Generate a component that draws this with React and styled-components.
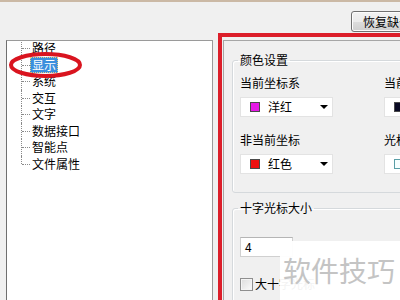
import React from "react";
import styled, { createGlobalStyle } from "styled-components";

const GlobalStyle = createGlobalStyle`
  html, body { margin: 0; padding: 0; }
  body {
    width: 400px; height: 300px; overflow: hidden;
    background: #f0f0f0;
    font-family: "Noto Sans CJK SC", "Noto Sans", sans-serif;
    font-size: 12px; color: #000;
  }
`;

const Page = styled.div`
  position: relative;
  width: 400px; height: 300px; box-sizing: border-box;
  overflow: hidden;
  border-top: 2px solid #cbb9a5;
  display: flex; flex-direction: column;
`;

const TopBar = styled.div`
  height: 31px; box-sizing: border-box;
  display: flex; align-items: flex-start;
  padding: 9px 0 0 351px;
  flex: none;
`;

const Button = styled.button`
  flex: none;
  height: 21px; box-sizing: border-box;
  padding: 0 11px;
  font: inherit; font-size: 12px; line-height: 19px;
  white-space: nowrap;
  border: 1px solid #707070; border-radius: 3px;
  background: linear-gradient(#f2f2f2 0%, #ebebeb 50%, #dddddd 51%, #cfcfcf 100%);
  box-shadow: inset 0 0 0 1px #fcfcfc;
  color: #000;
`;

const Main = styled.div`
  flex: 1; min-height: 0;
  display: flex; align-items: stretch;
`;

const TreePanel = styled.div`
  position: relative;
  flex: none;
  width: 207px; box-sizing: border-box;
  margin: 7px 0 0 6px;
  background: #fff;
  border: 1px solid #9a9a9a; border-left-color: #6f6f6f; border-bottom: none;
  overflow: hidden;
`;

const TreeList = styled.ul`
  list-style: none;
  margin: -1px 0 0 0;
  padding: 0 0 0 14px;
`;

const TreeItem = styled.li`
  position: relative;
  height: 16.5px;
  display: flex; align-items: center;
  padding-left: 9px;
  &::before {
    content: ""; position: absolute;
    left: 1px; top: 50%; width: 8px;
    border-top: 1px dotted #8a8a8a;
  }
  &::after {
    content: ""; position: absolute;
    left: 0; top: 0; bottom: ${(p) => (p.$last ? "50%" : "0")};
    border-left: 1px dotted #8a8a8a;
  }
`;

const TreeLabel = styled.span`
  height: 16px; line-height: 16px;
  padding: 0 2px;
  white-space: nowrap;
  background: ${(p) => (p.$selected ? "#3b8fdd" : "transparent")};
  color: ${(p) => (p.$selected ? "#fff" : "#000")};
  outline: ${(p) => (p.$selected ? "1px dotted #e8d080" : "none")};
  outline-offset: -1px;
`;

const Circle = styled.svg`
  position: absolute;
  left: -1px; top: 9px;
  pointer-events: none;
`;

const RedFrame = styled.div`
  flex: none;
  margin-left: 5px;
  width: 300px;
  border: 4px solid #dc1e2a;
  border-right: none; border-bottom: none;
  padding: 3px 0 0 1px;
  display: flex;
`;

const InnerPanel = styled.div`
  flex: 1;
  border-top: 1px solid #a6a6a6;
  border-left: 1px solid #a6a6a6;
  padding: 12px 0 0 8px;
`;

const Group = styled.fieldset`
  margin: ${(p) => p.$mt || 0}px 0 0 0;
  width: 280px; box-sizing: border-box;
  border: 1px solid #d5d9dc;
  border-radius: 3px;
  padding: 0 0 ${(p) => p.$pb || 0}px 7px;
  box-shadow: inset 1px 1px 0 #fff;
`;

const Legend = styled.legend`
  margin-left: -2px;
  padding: 0 2px;
  line-height: 14px;
  font-size: 12px;
`;

const FieldGrid = styled.div`
  margin-top: 8px;
  display: grid;
  grid-template-columns: 93px 93px;
  column-gap: 51px;
  row-gap: 15px;
`;

const Field = styled.div`
  display: flex; flex-direction: column;
`;

const FieldLabel = styled.div`
  height: 16px; line-height: 16px;
  margin-bottom: 6px;
  white-space: nowrap;
`;

const Dropdown = styled.div`
  height: 20px; box-sizing: border-box;
  display: flex; align-items: center;
  background: #fff;
  border: 1px solid #e3e3e3;
  padding-left: 9px;
`;

const Swatch = styled.span`
  flex: none;
  width: 10px; height: 10px; box-sizing: border-box;
  border: 1px solid ${(p) => p.$border || "#4a4a4a"};
  background: ${(p) => p.$color};
`;

const DropText = styled.span`
  margin-left: 8px;
  line-height: 16px;
  white-space: nowrap;
`;

const Arrow = styled.span`
  margin-left: auto; margin-right: 4px;
  width: 0; height: 0;
  border-left: 4px solid transparent;
  border-right: 4px solid transparent;
  border-top: 4px solid #000;
`;

const TextBox = styled.div`
  margin-top: 22px;
  width: 53px; height: 20px; box-sizing: border-box;
  background: #fff;
  border: 1px solid #d0d0d0; border-top-color: #b5b5b5;
  padding-left: 4px;
  line-height: 18px;
`;

const CheckRow = styled.div`
  margin-top: 19px;
  display: flex; align-items: center;
  height: 16px;
`;

const CheckBox = styled.span`
  width: 13px; height: 13px; box-sizing: border-box;
  border: 1px solid #8f8f8f;
  background: linear-gradient(135deg, #dcdcdc, #fbfbfb);
  box-shadow: inset 0 0 0 1px #f4f4f4;
`;

const CheckText = styled.span`
  margin-left: 2px;
  line-height: 16px;
  white-space: nowrap;
`;

const Watermark = styled.div`
  position: absolute;
  left: 280px; top: 239px;
  width: 120px; height: 61px;
  background: rgba(255, 255, 255, 0.95);
  box-sizing: border-box;
  padding: 14px 0 0 3px;
  font-size: 28px; line-height: 30px;
  color: #c4c4c4;
  white-space: nowrap;
`;

const items = ["路径", "显示", "系统", "交互", "文字", "数据接口", "智能点", "文件属性"];

export default function App() {
  return (
    <>
      <GlobalStyle />
      <Page>
        <TopBar>
          <Button>恢复缺省设置</Button>
        </TopBar>
        <Main>
          <TreePanel>
            <TreeList>
              {items.map((t, i) => (
                <TreeItem key={t} $last={i === items.length - 1}>
                  <TreeLabel $selected={t === "显示"}>{t}</TreeLabel>
                </TreeItem>
              ))}
            </TreeList>
            <Circle width="80" height="32" viewBox="0 0 80 32">
              <ellipse cx="39.5" cy="15" rx="34.5" ry="11" fill="none" stroke="#d9141f" strokeWidth="4" />
            </Circle>
          </TreePanel>
          <RedFrame>
            <InnerPanel>
              <Group $pb={18}>
                <Legend>颜色设置</Legend>
                <FieldGrid>
                  <Field>
                    <FieldLabel>当前坐标系</FieldLabel>
                    <Dropdown>
                      <Swatch $color="#e61ae6" />
                      <DropText>洋红</DropText>
                      <Arrow />
                    </Dropdown>
                  </Field>
                  <Field>
                    <FieldLabel>当前坐标轴</FieldLabel>
                    <Dropdown>
                      <Swatch $color="#0a0a24" />
                      <DropText>黑色</DropText>
                      <Arrow />
                    </Dropdown>
                  </Field>
                  <Field>
                    <FieldLabel>非当前坐标</FieldLabel>
                    <Dropdown>
                      <Swatch $color="#ee1111" />
                      <DropText>红色</DropText>
                      <Arrow />
                    </Dropdown>
                  </Field>
                  <Field>
                    <FieldLabel>光标颜色</FieldLabel>
                    <Dropdown>
                      <Swatch $color="#f6ffff" $border="#5a9ea6" />
                      <DropText>白色</DropText>
                      <Arrow />
                    </Dropdown>
                  </Field>
                </FieldGrid>
              </Group>
              <Group $mt={8} $pb={20}>
                <Legend>十字光标大小</Legend>
                <TextBox>4</TextBox>
                <CheckRow>
                  <CheckBox />
                  <CheckText>大十字光标</CheckText>
                </CheckRow>
              </Group>
            </InnerPanel>
          </RedFrame>
        </Main>
        <Watermark>软件技巧</Watermark>
      </Page>
    </>
  );
}
